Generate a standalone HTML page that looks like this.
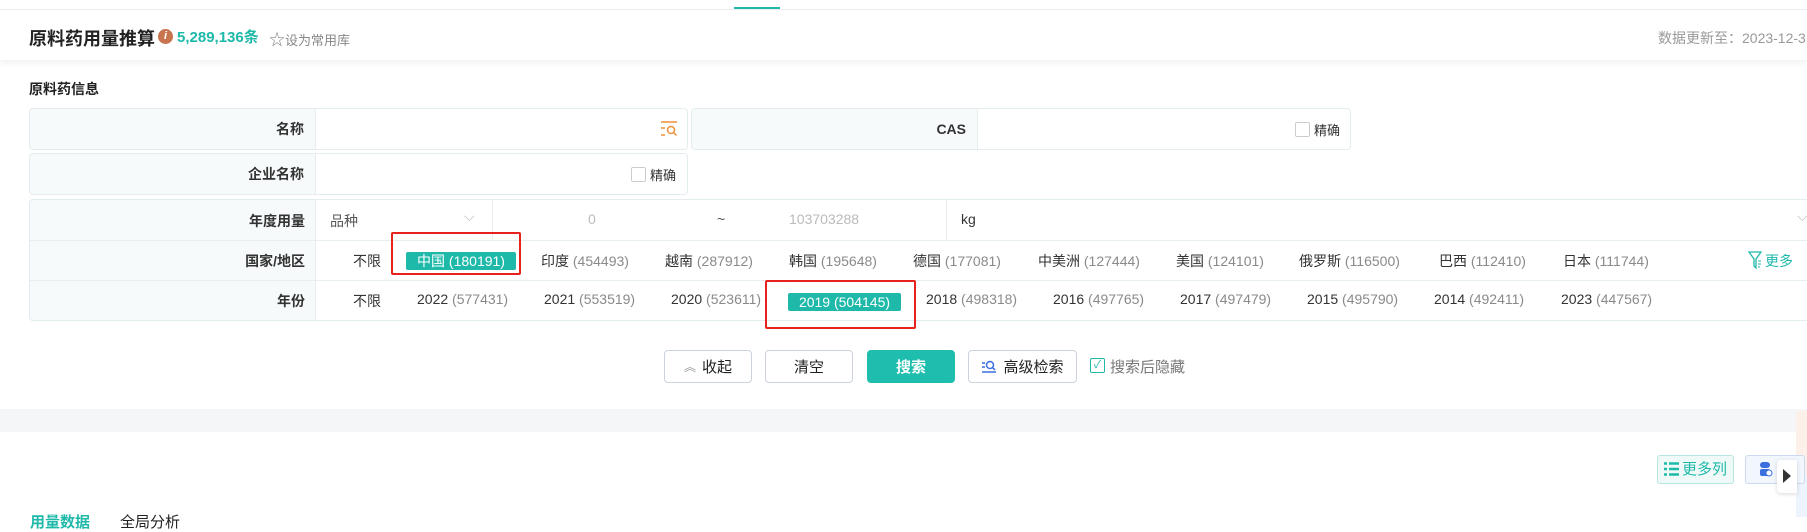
<!DOCTYPE html>
<html><head><meta charset="utf-8">
<style>
*{box-sizing:border-box;margin:0;padding:0}
body{width:1807px;height:517px;overflow:hidden;background:#fff;font-family:"Liberation Sans","Noto Sans CJK SC",sans-serif;color:#333;font-size:14px;position:relative}
.a{position:absolute;white-space:nowrap}
.lab{position:absolute;background:#f7fafb;border-right:1px solid #e6eef0;text-align:right;padding-right:11px;font-weight:600;color:#333}
.rl{position:absolute;left:0;width:275px;text-align:right;font-weight:600;color:#333}
.box{position:absolute;border:1px solid #e3ecee;border-radius:4px;background:#fff;overflow:hidden}
.g{color:#8a8a8a}
.btn{position:absolute;top:350px;height:33px;border:1px solid #cdd3dc;border-radius:4px;background:#fff;font-size:15px;display:flex;align-items:center;justify-content:center;color:#222}
.tag{position:absolute;background:#1fb9aa;color:#fff;border-radius:2px;text-align:center}
.red{position:absolute;border:2px solid #e8211d;border-radius:2px}
.row{position:absolute;left:0;right:0;border-top:1px solid #e6eef0}
</style></head><body>
<div class="a" style="left:0;top:0;width:1807px;height:10px;border-bottom:1px solid #eceff1"></div>
<div class="a" style="left:734px;top:7px;width:46px;height:2px;background:#1fb9aa"></div>
<div class="a" style="left:0;top:10px;width:1807px;height:50px;box-shadow:0 3px 6px rgba(0,0,0,.06)"></div>
<div class="a" style="left:29px;top:25px;font-size:18px;font-weight:700;color:#222">原料药用量推算</div>
<div class="a" style="left:158px;top:29px;width:15px;height:15px;border-radius:50%;background:#c8744e;color:#fff;font-size:11px;font-weight:700;text-align:center;line-height:15px;font-style:italic">i</div>
<div class="a" style="left:177px;top:26px;font-size:15px;font-weight:700;color:#1fb9aa">5,289,136条</div>
<div class="a" style="left:269px;top:26px;font-size:13px;color:#888"><span style="font-size:16px">☆</span>设为常用库</div>
<div class="a" style="left:1658px;top:28px;font-size:14px;color:#999">数据更新至：2023-12-3</div>

<div class="a" style="left:29px;top:79px;font-size:14px;font-weight:700;color:#222">原料药信息</div>

<div class="box" style="left:29px;top:108px;width:659px;height:42px">
 <div class="lab" style="left:0;top:0;width:286px;height:40px;line-height:40px">名称</div>
 <svg class="a" style="left:630px;top:12px" width="18" height="16" viewBox="0 0 18 16"><path d="M1 1h16M1 7h4M1 14h4" stroke="#f0903a" stroke-width="1.5"/><circle cx="11" cy="9" r="3.5" fill="none" stroke="#f0903a" stroke-width="1.5"/><path d="M13.5 11.5l3 3" stroke="#f0903a" stroke-width="1.5"/></svg>
</div>
<div class="box" style="left:691px;top:108px;width:660px;height:42px">
 <div class="lab" style="left:0;top:0;width:286px;height:40px;line-height:40px">CAS</div>
 <div class="a" style="left:603px;top:13px;width:15px;height:15px;border:1px solid #ccc;border-radius:2px"></div>
 <div class="a" style="left:622px;top:11px;font-size:13px">精确</div>
</div>
<div class="box" style="left:29px;top:153px;width:659px;height:42px">
 <div class="lab" style="left:0;top:0;width:286px;height:40px;line-height:40px">企业名称</div>
 <div class="a" style="left:601px;top:13px;width:15px;height:15px;border:1px solid #ccc;border-radius:2px"></div>
 <div class="a" style="left:620px;top:11px;font-size:13px">精确</div>
</div>

<div class="box" style="left:29px;top:199px;width:1800px;height:122px;border-right:none">
 <div class="lab" style="left:0;top:0;width:286px;height:122px"></div>
 <div class="row" style="top:40px"></div><div class="row" style="top:80px"></div>
 <div class="rl" style="top:11px">年度用量</div>
 <div class="rl" style="top:51px">国家/地区</div>
 <div class="rl" style="top:91px">年份</div>
 <div class="a" style="left:462px;top:0;width:1px;height:40px;background:#e6eef0"></div>
 <div class="a" style="left:916px;top:0;width:1px;height:40px;background:#e6eef0"></div>
 <div class="a" style="left:300px;top:11px;color:#555">品种</div>
 <div class="a" style="left:434px;top:8px;color:#bbb">⌵</div>
 <div class="a" style="left:558px;top:11px;color:#bbb">0</div>
 <div class="a" style="left:687px;top:11px;color:#555">~</div>
 <div class="a" style="left:759px;top:11px;color:#bbb">103703288</div>
 <div class="a" style="left:931px;top:11px;color:#333">kg</div>
 <div class="a" style="left:1767px;top:8px;color:#bbb">⌵</div>

 <div class="a" style="left:323px;top:51px">不限</div>
 <div class="tag" style="left:376px;top:52px;width:110px;height:18px;line-height:18px">中国 (180191)</div>
 <div class="a" style="left:511px;top:51px">印度 <span class="g">(454493)</span></div>
 <div class="a" style="left:635px;top:51px">越南 <span class="g">(287912)</span></div>
 <div class="a" style="left:759px;top:51px">韩国 <span class="g">(195648)</span></div>
 <div class="a" style="left:883px;top:51px">德国 <span class="g">(177081)</span></div>
 <div class="a" style="left:1008px;top:51px">中美洲 <span class="g">(127444)</span></div>
 <div class="a" style="left:1146px;top:51px">美国 <span class="g">(124101)</span></div>
 <div class="a" style="left:1269px;top:51px">俄罗斯 <span class="g">(116500)</span></div>
 <div class="a" style="left:1409px;top:51px">巴西 <span class="g">(112410)</span></div>
 <div class="a" style="left:1533px;top:51px">日本 <span class="g">(111744)</span></div>
 <svg class="a" style="left:1718px;top:51px" width="15" height="18" viewBox="0 0 15 18"><path d="M1 1h12L8 8v9L6 15V8z" fill="none" stroke="#1fb9aa" stroke-width="1.3"/><path d="M10 10h3M10 13h3M10 16h2" stroke="#1fb9aa"/></svg>
 <div class="a" style="left:1735px;top:51px;color:#1fb9aa">更多</div>

 <div class="a" style="left:323px;top:91px">不限</div>
 <div class="a" style="left:387px;top:91px">2022 <span class="g">(577431)</span></div>
 <div class="a" style="left:514px;top:91px">2021 <span class="g">(553519)</span></div>
 <div class="a" style="left:641px;top:91px">2020 <span class="g">(523611)</span></div>
 <div class="tag" style="left:758px;top:93px;width:113px;height:18px;line-height:18px">2019 (504145)</div>
 <div class="a" style="left:896px;top:91px">2018 <span class="g">(498318)</span></div>
 <div class="a" style="left:1023px;top:91px">2016 <span class="g">(497765)</span></div>
 <div class="a" style="left:1150px;top:91px">2017 <span class="g">(497479)</span></div>
 <div class="a" style="left:1277px;top:91px">2015 <span class="g">(495790)</span></div>
 <div class="a" style="left:1404px;top:91px">2014 <span class="g">(492411)</span></div>
 <div class="a" style="left:1531px;top:91px">2023 <span class="g">(447567)</span></div>
</div>
<div class="red" style="left:391px;top:232px;width:130px;height:43px"></div>
<div class="red" style="left:765px;top:280px;width:151px;height:49px"></div>

<div class="btn" style="left:664px;width:88px"><span style="color:#999;font-size:12px;margin-right:6px">︽</span>收起</div>
<div class="btn" style="left:765px;width:88px">清空</div>
<div class="btn" style="left:867px;width:88px;background:#1fbdae;border-color:#1fbdae;color:#fff;font-weight:700">搜索</div>
<div class="btn" style="left:968px;width:109px"><svg width="16" height="14" viewBox="0 0 16 14" style="margin-right:6px"><circle cx="9" cy="5" r="3.5" fill="none" stroke="#3b6fe0" stroke-width="1.5"/><path d="M11.5 7.5l2.5 2.5M1 3h3M1 7h3M1 12h14" stroke="#3b6fe0" stroke-width="1.5"/></svg>高级检索</div>
<div class="a" style="left:1090px;top:358px;width:15px;height:15px;border:1px solid #1fb9aa;border-radius:2px;color:#1fb9aa;font-size:11px;line-height:13px;text-align:center">✓</div>
<div class="a" style="left:1110px;top:356px;font-size:15px;color:#777">搜索后隐藏</div>

<div class="a" style="left:0;top:409px;width:1807px;height:23px;background:#f5f6f8"></div>
<div class="a" style="left:1796px;top:411px;width:11px;height:65px;background:#fdf0e8"></div>
<div class="a" style="left:1796px;top:476px;width:11px;height:41px;background:#eef4fd"></div>

<div class="a" style="left:1657px;top:455px;width:77px;height:29px;border:1px solid #b6e6df;border-radius:3px;background:#effaf8;color:#1fb9aa;font-size:15px;line-height:27px;padding-left:24px">更多列</div>
<svg class="a" style="left:1664px;top:462px" width="15" height="14" viewBox="0 0 15 14"><path d="M0 1.5h3M5 1.5h10M0 7h3M5 7h10M0 12.5h3M5 12.5h10" stroke="#1fb9aa" stroke-width="2.5"/></svg>
<div class="a" style="left:1745px;top:455px;width:60px;height:29px;border:1px solid #cbdaf0;border-radius:3px;background:#f2f6fd"></div>
<svg class="a" style="left:1759px;top:462px" width="14" height="15" viewBox="0 0 14 15"><rect x="1" y="0" width="10" height="6" rx="3" fill="#3b6fe0"/><rect x="1" y="7" width="10" height="7" rx="2" fill="#3b6fe0"/><circle cx="10" cy="11" r="3" fill="#fff" stroke="#3b6fe0"/></svg>
<div class="a" style="left:1777px;top:460px;width:20px;height:33px;background:#fff;border-radius:4px 0 0 4px;box-shadow:0 1px 4px rgba(0,0,0,.15)"></div>
<div class="a" style="left:1783px;top:469px;width:0;height:0;border-left:8px solid #333;border-top:7px solid transparent;border-bottom:7px solid transparent"></div>

<div class="a" style="left:30px;top:511px;font-size:15px;font-weight:700;color:#1fb9aa">用量数据</div>
<div class="a" style="left:120px;top:511px;font-size:15px;color:#222">全局分析</div>
</body></html>
